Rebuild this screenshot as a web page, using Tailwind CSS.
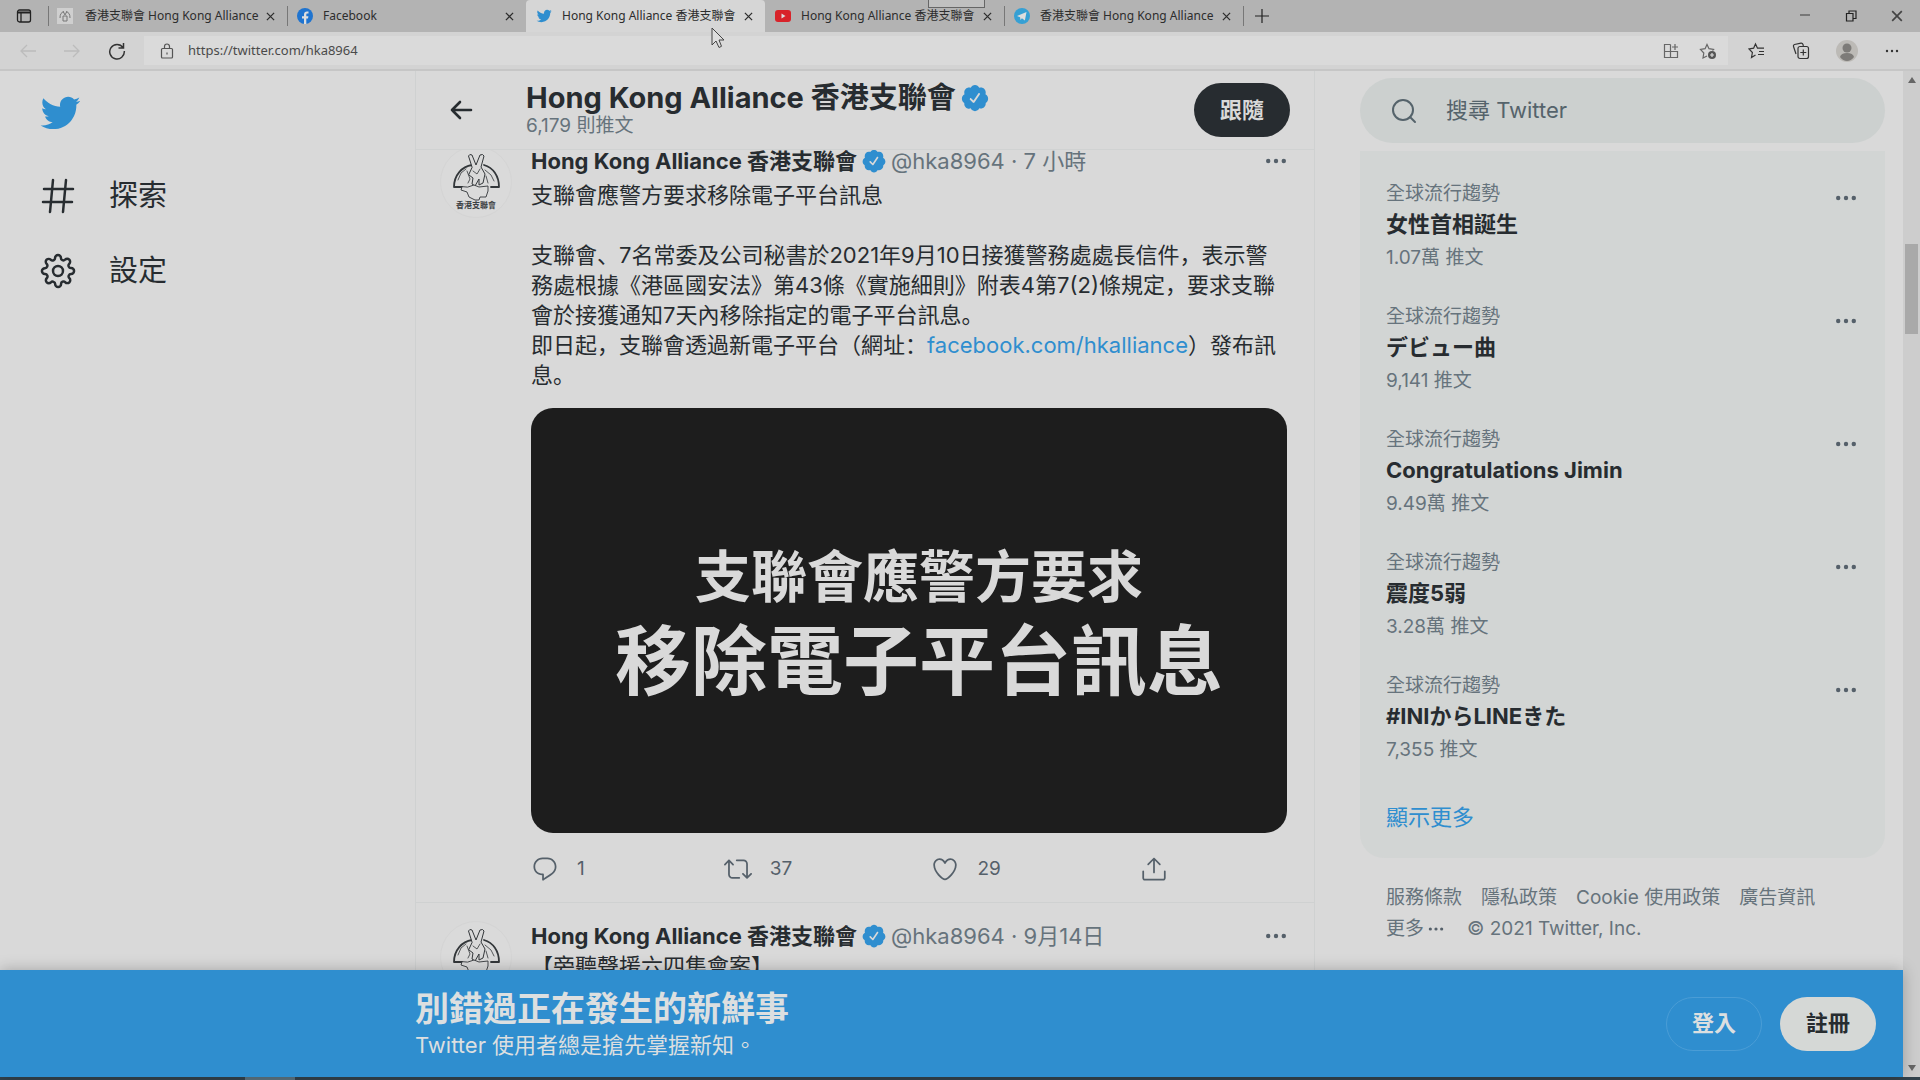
<!DOCTYPE html>
<html lang="zh-Hant">
<head>
    <meta charset="UTF-8">
    <meta name="viewport" content="width=device-width, initial-scale=1.0">
    <title>Hong Kong Alliance 香港支聯會 | Twitter</title>
    <script src="https://cdn.jsdelivr.net/npm/@tailwindcss/browser@4"></script>
</head>
<body class="bg-[#d9d9d9] text-[#272c30] font-['Inter','Noto_Sans_CJK_TC',sans-serif]">

    <!-- Shared icons -->
    <svg class="hidden">
        <symbol id="bird" viewBox="0 0 24 24"><path d="M23.643 4.937c-.835.37-1.732.62-2.675.733.962-.576 1.7-1.49 2.048-2.578-.9.534-1.897.922-2.958 1.13-.85-.904-2.06-1.47-3.4-1.47-2.572 0-4.658 2.086-4.658 4.66 0 .364.042.718.12 1.06-3.873-.195-7.304-2.05-9.602-4.868-.4.69-.63 1.49-.63 2.342 0 1.616.823 3.043 2.072 3.878-.764-.025-1.482-.234-2.11-.583v.06c0 2.257 1.605 4.14 3.737 4.568-.392.106-.803.162-1.227.162-.3 0-.593-.028-.877-.082.593 1.85 2.313 3.198 4.352 3.234-1.595 1.25-3.604 1.995-5.786 1.995-.376 0-.747-.022-1.112-.065 2.062 1.323 4.51 2.093 7.14 2.093 8.57 0 13.255-7.098 13.255-13.254 0-.2-.005-.402-.014-.602.91-.658 1.7-1.477 2.323-2.41z"/></symbol>
        <symbol id="verified" viewBox="0 0 24 24"><path d="M22.5 12.5c0-1.58-.875-2.95-2.148-3.6.154-.435.238-.905.238-1.4 0-2.21-1.71-3.998-3.818-3.998-.47 0-.92.084-1.336.25C14.818 2.415 13.51 1.5 12 1.5s-2.816.917-3.437 2.25c-.415-.165-.866-.25-1.336-.25-2.11 0-3.818 1.79-3.818 4 0 .494.083.964.237 1.4-1.272.65-2.147 2.018-2.147 3.6 0 1.495.782 2.798 1.942 3.486-.02.17-.032.34-.032.514 0 2.21 1.708 4 3.818 4 .47 0 .92-.086 1.335-.25.62 1.334 1.926 2.25 3.437 2.25 1.512 0 2.818-.916 3.437-2.25.415.163.865.248 1.336.248 2.11 0 3.818-1.79 3.818-4 0-.174-.012-.344-.033-.513 1.158-.687 1.943-1.99 1.943-3.484zm-6.616-3.334l-4.334 6.5c-.145.217-.382.334-.625.334-.143 0-.288-.04-.416-.126l-.115-.094-2.415-2.415c-.293-.293-.293-.768 0-1.06s.768-.294 1.06 0l1.77 1.767 3.825-5.74c.23-.345.696-.436 1.04-.207.346.23.44.696.21 1.04z"/></symbol>
        <symbol id="dots" viewBox="0 0 24 24"><circle cx="3.5" cy="12" r="2.4"/><circle cx="12" cy="12" r="2.4"/><circle cx="20.5" cy="12" r="2.4"/></symbol>
        <symbol id="close" viewBox="0 0 10 10"><path d="M1 1l8 8M9 1l-8 8" fill="none" stroke="currentColor" stroke-width="1.4"/></symbol>
        <symbol id="alliance" viewBox="0 0 72 72">
            <circle cx="36" cy="36" r="35.5" fill="#dadada" stroke="#d4d4d4" stroke-width="1"/>
            <g fill="none" stroke="#33373a" stroke-linejoin="round" stroke-linecap="round">
                <path d="M14 41c0-12 8-20.500 18-22M44 19c9 2.500 15 11 15 22M14 41h8M51 41h8" stroke-width="1.800"/>
                <path d="M32 21L28.500 10q1-2.500 3.500-1l4 10 4-10q3-1.500 4 1L41 21l4 7-2 9-4 2v-6l-4 7-3-2 1-6-4-3z" fill="#d9d9d9" stroke-width="1"/>
                <path d="M33 25l4 3 3-5M18 34l3-7 5-4M27 25l3 8-2 4M45 24l6 5 3 6M46 30l2 7" stroke-width=".8"/>
                <path d="M22 41l-1 3 6 2 2 5 6 3 4 0 1-3 6 0 2-6 0-5-9 1-5-2-6 2z" fill="#dbdbdb" stroke-width=".9"/>
            </g>
            <text x="36" y="62" text-anchor="middle" font-size="8" font-weight="700" fill="#3c4043">香港支聯會</text>
        </symbol>
    </svg>

    <div class="h-screen flex flex-col overflow-hidden">

        <!-- Tab strip -->
        <div class="relative h-8 shrink-0 flex items-center bg-[#b3b3b3] text-[#2d2d2d] text-xs font-['Noto_Sans','Noto_Sans_CJK_TC',sans-serif]">
            <button class="w-12 flex justify-center" aria-label="Tab actions">
                <svg class="size-4" viewBox="0 0 16 16" fill="none" stroke="#222" stroke-width="1.300"><rect x="1.500" y="2" width="13" height="12" rx="2"/><path d="M2 4.500h12" stroke-width="2"/><path d="M5 5v9"/></svg>
            </button>
            <div class="w-[239px] h-full flex items-center pl-2 pr-3">
                <span class="w-px h-5 bg-[#777] -ml-2 mr-2"></span>
                <svg class="size-4 mr-3 shrink-0"><rect width="16" height="16" fill="#cfcfcf"/><path d="M3 10q0-6 4-6M13 10q0-6-4-6M6 3l2 4 2-4M6 8v5h4V8z" fill="none" stroke="#777"/></svg>
                <span class="flex-1 whitespace-nowrap">香港支聯會 Hong Kong Alliance</span>
                <button aria-label="Close tab"><svg class="size-[9px]"><use href="#close"/></svg></button>
            </div>
            <div class="w-[239px] h-full flex items-center pl-2 pr-3">
                <span class="w-px h-5 bg-[#777] -ml-2 mr-2"></span>
                <svg class="size-4 ml-px mr-[10px] shrink-0" viewBox="0 0 16 16"><circle cx="8" cy="8" r="8" fill="#1f74d0"/><path d="M7 16v-5.500H5V8.200h2V6.500C7 4.500 8.200 3.500 10 3.500l1.500.1v2h-1c-1 0-1.200.5-1.200 1.200v1.400h2.100l-.4 2.300H9.300V16z" fill="#dedede"/></svg>
                <span class="flex-1 whitespace-nowrap">Facebook</span>
                <button aria-label="Close tab"><svg class="size-[9px]"><use href="#close"/></svg></button>
            </div>
            <div class="w-[239px] h-full flex items-center pl-[10px] pr-3 bg-[#d6d6d6] rounded-t">
                <svg class="size-4 mr-[10px] shrink-0" fill="#2f8ecf"><use href="#bird"/></svg>
                <span class="flex-1 whitespace-nowrap">Hong Kong Alliance 香港支聯會</span>
                <button aria-label="Close tab"><svg class="size-[9px]"><use href="#close"/></svg></button>
            </div>
            <div class="w-[239px] h-full flex items-center pl-[10px] pr-3">
                <svg class="size-4 mr-[10px] shrink-0" viewBox="0 0 16 16"><rect y="2" width="16" height="12" rx="3" fill="#d8232a"/><path d="M6.500 5.500v5l4-2.500z" fill="#ddd"/></svg>
                <span class="flex-1 whitespace-nowrap">Hong Kong Alliance 香港支聯會</span>
                <button aria-label="Close tab"><svg class="size-[9px]"><use href="#close"/></svg></button>
            </div>
            <div class="w-[239px] h-full flex items-center pl-2 pr-3">
                <span class="w-px h-5 bg-[#777] -ml-2 mr-2"></span>
                <svg class="size-4 ml-px mr-[10px] shrink-0" viewBox="0 0 16 16"><circle cx="8" cy="8" r="8" fill="#36a0d4"/><path d="M3 8l9.500-4-1.600 8.500-3-2.200L6.500 12l-.4-2.800z" fill="#dedede"/></svg>
                <span class="flex-1 whitespace-nowrap">香港支聯會 Hong Kong Alliance</span>
                <button aria-label="Close tab"><svg class="size-[9px]"><use href="#close"/></svg></button>
            </div>
            <span class="w-px h-5 bg-[#777]"></span>
            <button class="ml-[10px]" aria-label="New tab"><svg class="size-4" viewBox="0 0 16 16" stroke="#222" stroke-width="1.200"><path d="M8 1v14M1 8h14"/></svg></button>
            <div class="ml-auto pr-[17px] flex items-center gap-[34px]">
                <button aria-label="Minimize"><svg class="size-3" viewBox="0 0 12 12"><path d="M1 5h10" stroke="#777" stroke-width="2"/></svg></button>
                <button aria-label="Restore"><svg class="size-3" viewBox="0 0 12 12" fill="none" stroke="#222" stroke-width="1.200"><path d="M1.500 3.500h6.500v7.500H1.500zM4 3.500V1h7v7.500H8"/></svg></button>
                <button aria-label="Close window"><svg class="size-3 text-[#444]"><use href="#close"/></svg></button>
            </div>
            <!-- Window handle and mouse pointer lie over the tabs -->
            <div class="absolute left-[928px] top-0 w-[57px] h-2 bg-[#c0c0c0] border border-t-0 border-[#666]"></div>
            <svg class="absolute left-[711px] top-[27px] w-[14px] h-[22px] z-20" viewBox="0 0 14 22"><path d="M1 1v17l4-4 3 6.500 2.500-1.200L8 13h5z" fill="#dedede" stroke="#444" stroke-width="1"/></svg>
        </div>

        <!-- Address bar -->
        <div class="h-[39px] shrink-0 flex items-center pr-5 bg-[#d3d3d3] border-b-2 border-[#c6c6c6] font-['Noto_Sans',sans-serif]">
            <div class="w-36 flex items-center pl-5 gap-7">
                <button aria-label="Back"><svg class="size-4" viewBox="0 0 16 16" fill="none" stroke="#bcbcbc" stroke-width="1.300"><path d="M16 8H1M7 2L1 8l6 6"/></svg></button>
                <button aria-label="Forward"><svg class="size-4" viewBox="0 0 16 16" fill="none" stroke="#bcbcbc" stroke-width="1.300"><path d="M0 8h15M9 2l6 6-6 6"/></svg></button>
                <button aria-label="Refresh"><svg class="size-[18px]" viewBox="0 0 18 18" fill="none" stroke="#333" stroke-width="1.500"><path d="M15 5.500A7.300 7.300 0 1 0 16.300 9M15.500 1v5h-5"/></svg></button>
            </div>
            <div class="flex-1 h-[29px] flex items-center bg-[#dadada] px-[15px]">
                <svg class="size-4 mr-[13px]" viewBox="0 0 16 16" fill="none" stroke="#555" stroke-width="1.200"><rect x="2.500" y="5.500" width="11" height="9.500" rx="1"/><path d="M5.500 5.500V3.500a2.500 2.500 0 0 1 5 0v2M8 9.500v2"/></svg>
                <input class="flex-1 bg-transparent text-[13px] text-[#4a4a4a] outline-none" type="text" aria-label="Address" value="https://twitter.com/hka8964">
                <button aria-label="Apps"><svg class="size-4" viewBox="0 0 16 16" fill="none" stroke="#666" stroke-width="1.200"><path d="M7.500 1.500h-6v13h13v-6h-13M7.500 1.500v13M12 1v6M9 4h6"/></svg></button>
                <button class="ml-5 -mr-1" aria-label="Add to favourites"><svg class="size-[18px]" viewBox="0 0 18 18" fill="none" stroke="#666" stroke-width="1.200"><path d="M8 14l-4 2 .8-5L1.500 7.500l4.600-.8L8 2.500l2 4.200 4.500.8-1 1"/><circle cx="13" cy="13" r="4" fill="#555" stroke="none"/><path d="M13 11v4M11 13h4" stroke="#ddd"/></svg></button>
            </div>
            <div class="flex items-center pl-5 gap-[26px]">
                <button aria-label="Favourites"><svg class="size-[18px]" viewBox="0 0 18 18" fill="none" stroke="#333" stroke-width="1.200"><path d="M7.500 13l-4 2.500.9-5L1 7l4.600-.8L7.500 2l2 4.200H16M11 9.500h5M10 12.500h6"/></svg></button>
                <button aria-label="Collections"><svg class="size-[18px]" viewBox="0 0 18 18" fill="none" stroke="#333" stroke-width="1.200"><path d="M4 12L1.500 4.500Q1 3 2.500 2.500L9 1.200q1.500-.2 2 1.300l.3 1.500"/><rect x="6" y="4.500" width="10.500" height="12" rx="2"/><path d="M11.300 7.500v6M8.300 10.500h6"/></svg></button>
                <button aria-label="Profile"><svg class="size-[22px]" viewBox="0 0 22 22"><circle cx="11" cy="11" r="11" fill="#bcbab6"/><circle cx="11" cy="8" r="4.500" fill="#7d7b78"/><path d="M4 17q1-4 7-4t7 4q-3 4-7 4t-7-4z" fill="#7d7b78"/></svg></button>
                <button aria-label="Settings and more"><svg class="size-4" fill="#333" viewBox="0 0 16 16"><circle cx="3" cy="8" r="1.200"/><circle cx="8" cy="8" r="1.200"/><circle cx="13" cy="8" r="1.200"/></svg></button>
            </div>
        </div>

        <div class="flex-1 min-h-0 flex">
            <div class="flex-1 min-w-0 flex flex-col">
                <div class="flex-1 min-h-0 overflow-hidden grid grid-cols-[415fr_900fr_588fr]">

                    <!-- Navigation -->
                    <nav class="pl-[39px] pt-[21px]">
                        <a href="#" class="block" aria-label="Twitter"><svg class="size-[42px]" fill="#2f8ecf"><use href="#bird"/></svg></a>
                        <div class="mt-6 text-[29px]">
                            <a href="#" class="h-[75px] flex items-center gap-[32px]">
                                <svg class="size-[38px]" viewBox="0 0 38 38" stroke="#272c30" stroke-width="2.500" stroke-linecap="round"><path d="M14 3l-3 32M27 3l-3 32M5 12h29M4 25h29"/></svg>
                                <span>探索</span>
                            </a>
                            <a href="#" class="h-[75px] flex items-center gap-[32px]">
                                <svg class="size-[38px]" viewBox="0 0 26 26" fill="none" stroke="#272c30" stroke-width="1.700"><g transform="translate(1 1)"><circle cx="12" cy="12" r="3.400"/><path d="M19.400 15a1.650 1.650 0 0 0 .33 1.820l.06.06a2 2 0 0 1 0 2.830 2 2 0 0 1-2.830 0l-.06-.06a1.650 1.650 0 0 0-1.820-.33 1.650 1.650 0 0 0-1 1.510V21a2 2 0 0 1-2 2 2 2 0 0 1-2-2v-.09A1.650 1.650 0 0 0 9 19.400a1.650 1.650 0 0 0-1.820.33l-.06.06a2 2 0 0 1-2.830 0 2 2 0 0 1 0-2.830l.06-.06a1.650 1.650 0 0 0 .33-1.820 1.650 1.650 0 0 0-1.510-1H3a2 2 0 0 1-2-2 2 2 0 0 1 2-2h.09A1.650 1.650 0 0 0 4.600 9a1.650 1.650 0 0 0-.33-1.820l-.06-.06a2 2 0 0 1 0-2.830 2 2 0 0 1 2.830 0l.06.06a1.650 1.650 0 0 0 1.820.33H9a1.650 1.650 0 0 0 1-1.510V3a2 2 0 0 1 2-2 2 2 0 0 1 2 2v.09a1.650 1.650 0 0 0 1 1.510 1.650 1.650 0 0 0 1.820-.33l.06-.06a2 2 0 0 1 2.830 0 2 2 0 0 1 0 2.830l-.06.06a1.650 1.650 0 0 0-.33 1.820V9a1.650 1.650 0 0 0 1.510 1H21a2 2 0 0 1 2 2 2 2 0 0 1-2 2h-.09a1.650 1.650 0 0 0-1.510 1z"/></g></svg>
                                <span>設定</span>
                            </a>
                        </div>
                    </nav>

                    <!-- Timeline -->
                    <main class="min-w-0 border-x border-[#cfd1d1]">
                        <header class="relative z-10 h-[79px] flex items-center px-6 bg-[#d9d9d9]/95 border-b border-[#d0d2d2]">
                            <button class="w-[86px] pl-[9px]" aria-label="Back"><svg class="size-6" viewBox="0 0 24 24" fill="none" stroke="#272c30" stroke-width="2.600" stroke-linecap="round" stroke-linejoin="round"><path d="M22 12H3M11 4l-8 8 8 8"/></svg></button>
                            <div>
                                <h1 class="flex items-center gap-1 text-[29px] leading-8 font-bold">Hong Kong Alliance 香港支聯會<svg class="size-[30px]" fill="#2f8ecf"><use href="#verified"/></svg></h1>
                                <p class="text-[19px] leading-6 text-[#66737c]">6,179 則推文</p>
                            </div>
                            <button class="ml-auto w-24 h-[54px] rounded-full bg-[#272c30] text-[#d9d9d9] text-[22px] font-bold">跟隨</button>
                        </header>

                        <div class="-mt-[22px]">
                            <article class="flex gap-[19px] pl-6 pr-[27px] pt-[18px] pb-[15px] border-b border-[#cfd1d1]">
                                <svg class="size-[72px] shrink-0"><use href="#alliance"/></svg>
                                <div class="flex-1 min-w-0 text-[22px] leading-[30px]">
                                    <div class="flex items-center whitespace-nowrap">
                                        <a href="#" class="font-bold">Hong Kong Alliance 香港支聯會</a>
                                        <svg class="size-[26px] mx-1" fill="#2f8ecf"><use href="#verified"/></svg>
                                        <span class="text-[#66737c]">@hka8964 · 7 小時</span>
                                        <button class="ml-auto" aria-label="More"><svg class="size-[22px]" fill="#55606a"><use href="#dots"/></svg></button>
                                    </div>
                                    <p lang="zh-Hans" class="mt-1 font-['Inter','Noto_Sans_CJK_SC',sans-serif]">支聯會應警方要求移除電子平台訊息<br><br>支聯會、7名常委及公司秘書於2021年9月10日接獲警務處處長信件，表示警務處根據《港區國安法》第43條《實施細則》附表4第7(2)條規定，要求支聯會於接獲通知7天內移除指定的電子平台訊息。<br>即日起，支聯會透過新電子平台（網址：<a href="#" class="text-[#2f8ecf]">facebook.com/hkalliance</a>）發布訊息。</p>
                                    <div class="mt-[18px] h-[425px] rounded-[22px] bg-[#1d1d1d] text-[#d9d9d9] font-bold flex flex-col items-center justify-center pl-5 pb-1">
                                        <span class="text-[56px] leading-[84px]">支聯會應警方要求</span>
                                        <span class="text-[76px] leading-[84px]">移除電子平台訊息</span>
                                    </div>
                                    <div class="mt-[18px] h-9 w-[637px] flex items-center justify-between text-[19px] text-[#55606a]">
                                        <button class="flex items-center gap-[18px]"><svg class="size-7" viewBox="0 0 24 24" fill="currentColor"><path d="M14.046 2.242l-4.148-.01h-.002c-4.374 0-7.8 3.427-7.8 7.802 0 4.098 3.186 7.206 7.465 7.370v3.828c0 .108.044.286.12.403.142.225.384.347.632.347.138 0 .277-.038.402-.118.264-.168 6.473-4.140 8.088-5.506 1.902-1.610 3.040-3.970 3.043-6.312v-.017c-.006-4.367-3.430-7.787-7.800-7.788zm3.787 12.972c-1.134.96-4.862 3.405-6.772 4.643V16.670c0-.414-.335-.75-.75-.75h-.396c-3.660 0-6.318-2.476-6.318-5.886 0-3.534 2.768-6.302 6.300-6.302l4.147.01h.002c3.532 0 6.300 2.766 6.302 6.296-.003 1.910-.942 3.844-2.514 5.176z"/></svg>1</button>
                                        <button class="flex items-center gap-[18px]"><svg class="size-7" viewBox="0 0 24 24" fill="currentColor"><path d="M23.770 15.670c-.292-.293-.767-.293-1.060 0l-2.220 2.220V7.650c0-2.068-1.683-3.750-3.750-3.750h-5.850c-.414 0-.75.336-.75.75s.336.75.75.75h5.850c1.240 0 2.250 1.010 2.250 2.250v10.240l-2.220-2.220c-.293-.293-.768-.293-1.060 0s-.294.768 0 1.060l3.500 3.500c.145.147.337.22.53.22s.383-.072.53-.22l3.500-3.500c.294-.292.294-.767 0-1.060zm-10.660 3.280H7.260c-1.240 0-2.250-1.010-2.250-2.250V6.460l2.220 2.220c.148.147.34.22.532.22s.384-.073.53-.22c.293-.293.293-.768 0-1.060l-3.500-3.500c-.293-.294-.768-.294-1.060 0l-3.500 3.500c-.294.292-.294.767 0 1.060s.767.293 1.060 0l2.220-2.220V16.700c0 2.068 1.683 3.750 3.750 3.750h5.850c.414 0 .75-.336.75-.75s-.337-.75-.75-.75z"/></svg>37</button>
                                        <button class="flex items-center gap-[18px]"><svg class="size-7" viewBox="0 0 24 24" fill="currentColor"><path d="M12 21.638h-.014C9.403 21.590 1.950 14.856 1.950 8.478c0-3.064 2.525-5.754 5.403-5.754 2.290 0 3.830 1.580 4.646 2.730.814-1.148 2.354-2.730 4.645-2.730 2.880 0 5.404 2.690 5.404 5.755 0 6.376-7.454 13.110-10.037 13.157H12zM7.354 4.225c-2.080 0-3.903 1.988-3.903 4.255 0 5.740 7.034 11.596 8.550 11.658 1.518-.062 8.550-5.917 8.550-11.658 0-2.267-1.823-4.255-3.903-4.255-2.528 0-3.940 2.936-3.952 2.965-.23.562-1.156.562-1.387 0-.014-.03-1.425-2.965-3.954-2.965z"/></svg>29</button>
                                        <button aria-label="Share"><svg class="size-7" viewBox="0 0 24 24" fill="currentColor"><path d="M17.530 7.470l-5-5c-.293-.293-.768-.293-1.060 0l-5 5c-.294.293-.294.768 0 1.060s.767.294 1.060 0l3.720-3.720V15c0 .414.336.75.75.75s.75-.336.75-.75V4.810l3.720 3.720c.146.147.338.22.53.22s.384-.072.53-.22c.293-.293.293-.767 0-1.060z"/><path d="M19.708 21.944H4.292C3.028 21.944 2 20.916 2 19.652V14c0-.414.336-.75.75-.75s.75.336.75.75v5.652c0 .437.355.792.792.792h15.416c.437 0 .792-.355.792-.792V14c0-.414.336-.75.75-.75s.75.336.75.75v5.652c0 1.264-1.028 2.292-2.292 2.292z"/></svg></button>
                                    </div>
                                </div>
                            </article>

                            <article class="flex gap-[19px] pl-6 pr-[27px] pt-[18px] pb-[15px]">
                                <svg class="size-[72px] shrink-0"><use href="#alliance"/></svg>
                                <div class="flex-1 min-w-0 text-[22px] leading-[30px]">
                                    <div class="flex items-center whitespace-nowrap">
                                        <a href="#" class="font-bold">Hong Kong Alliance 香港支聯會</a>
                                        <svg class="size-[26px] mx-1" fill="#2f8ecf"><use href="#verified"/></svg>
                                        <span class="text-[#66737c]">@hka8964 · 9月14日</span>
                                        <button class="ml-auto" aria-label="More"><svg class="size-[22px]" fill="#55606a"><use href="#dots"/></svg></button>
                                    </div>
                                    <p lang="zh-Hans" class="font-['Inter','Noto_Sans_CJK_SC',sans-serif]">【旁聽聲援六四集會案】</p>
                                </div>
                            </article>
                        </div>
                    </main>

                    <!-- Sidebar -->
                    <aside class="min-w-0 pl-[45px] pr-[18px]">
                        <div class="pt-[7px] pb-2">
                            <label class="h-[65px] rounded-full bg-[#ccd0cf] flex items-center px-[30px] gap-[28px]">
                                <svg class="size-7" viewBox="0 0 28 28" fill="none" stroke="#55636b" stroke-width="2" stroke-linecap="round"><circle cx="13" cy="13" r="10"/><path d="M20 20l5 5"/></svg>
                                <input class="flex-1 bg-transparent text-[22px] outline-none placeholder:text-[#55636b]" type="text" aria-label="搜尋 Twitter" placeholder="搜尋 Twitter">
                            </label>
                        </div>
                        <section class="pt-[14px] pb-1 bg-[#d2d5d4] rounded-b-[24px]">
                            <div class="flex justify-between pl-[26px] pr-7 py-[17px] h-[123px]">
                                <div>
                                    <p class="text-[19px] leading-6 text-[#66737c]">全球流行趨勢</p>
                                    <p class="mt-[3px] text-[22px] leading-[30px] font-bold">女性首相誕生</p>
                                    <p class="mt-[7px] text-[19px] leading-6 text-[#66737c]">1.07萬 推文</p>
                                </div>
                                <button class="self-start mt-[5px]" aria-label="More"><svg class="size-[22px]" fill="#55606a"><use href="#dots"/></svg></button>
                            </div>
                            <div class="flex justify-between pl-[26px] pr-7 py-[17px] h-[123px]">
                                <div>
                                    <p class="text-[19px] leading-6 text-[#66737c]">全球流行趨勢</p>
                                    <p class="mt-[3px] text-[22px] leading-[30px] font-bold" lang="ja">デビュー曲</p>
                                    <p class="mt-[7px] text-[19px] leading-6 text-[#66737c]">9,141 推文</p>
                                </div>
                                <button class="self-start mt-[5px]" aria-label="More"><svg class="size-[22px]" fill="#55606a"><use href="#dots"/></svg></button>
                            </div>
                            <div class="flex justify-between pl-[26px] pr-7 py-[17px] h-[123px]">
                                <div>
                                    <p class="text-[19px] leading-6 text-[#66737c]">全球流行趨勢</p>
                                    <p class="mt-[3px] text-[22px] leading-[30px] font-bold">Congratulations Jimin</p>
                                    <p class="mt-[7px] text-[19px] leading-6 text-[#66737c]">9.49萬 推文</p>
                                </div>
                                <button class="self-start mt-[5px]" aria-label="More"><svg class="size-[22px]" fill="#55606a"><use href="#dots"/></svg></button>
                            </div>
                            <div class="flex justify-between pl-[26px] pr-7 py-[17px] h-[123px]">
                                <div>
                                    <p class="text-[19px] leading-6 text-[#66737c]">全球流行趨勢</p>
                                    <p class="mt-[3px] text-[22px] leading-[30px] font-bold">震度5弱</p>
                                    <p class="mt-[7px] text-[19px] leading-6 text-[#66737c]">3.28萬 推文</p>
                                </div>
                                <button class="self-start mt-[5px]" aria-label="More"><svg class="size-[22px]" fill="#55606a"><use href="#dots"/></svg></button>
                            </div>
                            <div class="flex justify-between pl-[26px] pr-7 py-[17px] h-[123px]">
                                <div>
                                    <p class="text-[19px] leading-6 text-[#66737c]">全球流行趨勢</p>
                                    <p class="mt-[3px] text-[22px] leading-[30px] font-bold" lang="ja">#INIからLINEきた</p>
                                    <p class="mt-[7px] text-[19px] leading-6 text-[#66737c]">7,355 推文</p>
                                </div>
                                <button class="self-start mt-[5px]" aria-label="More"><svg class="size-[22px]" fill="#55606a"><use href="#dots"/></svg></button>
                            </div>
                            <a href="#" class="h-[74px] pl-[26px] flex items-center text-[22px] text-[#2f8ecf]">顯示更多</a>
                        </section>
                        <footer class="pt-6 px-[26px] flex flex-wrap gap-x-[19px] text-[19px] leading-[31px] text-[#66737c]">
                            <a href="#">服務條款</a>
                            <a href="#">隱私政策</a>
                            <a href="#">Cookie 使用政策</a>
                            <a href="#">廣告資訊</a>
                            <button class="flex items-center gap-1 pr-1">更多<svg class="size-4" fill="#55606a"><use href="#dots"/></svg></button>
                            <span>© 2021 Twitter, Inc.</span>
                        </footer>
                    </aside>
                </div>

                <!-- Sign-up banner -->
                <div class="relative z-10 h-[107px] shrink-0 flex items-center pl-[415px] pr-[27px] bg-[#2f8ecf] text-[#dcdfe0] shadow-[0_0_14px_rgba(0,0,0,0.25)]">
                    <div>
                        <p class="text-[34px] leading-[42px] font-bold">別錯過正在發生的新鮮事</p>
                        <p class="text-[22px] leading-[30px]">Twitter 使用者總是搶先掌握新知。</p>
                    </div>
                    <button class="ml-auto w-24 h-[54px] rounded-full border border-[#4a9dd6] text-[22px] font-bold">登入</button>
                    <button class="ml-[18px] w-24 h-[54px] rounded-full bg-[#d5d8d6] text-[#272c30] text-[22px] font-bold">註冊</button>
                </div>
            </div>

            <!-- Scrollbar -->
            <div class="w-[17px] shrink-0 flex flex-col items-center justify-between py-[6px] bg-[#cdcdcd]">
                <svg class="w-2 h-[6px]" viewBox="0 0 8 6"><path d="M0 6l4-6 4 6z" fill="#666"/></svg>
                <div class="w-[13px] h-[90px] mb-[570px] bg-[#a9a9a9]"></div>
                <svg class="w-2 h-[6px]" viewBox="0 0 8 6"><path d="M0 0l4 6 4-6z" fill="#666"/></svg>
            </div>
        </div>

        <!-- Taskbar edge -->
        <div class="h-[3px] shrink-0 bg-[#33434d]"><div class="ml-[245px] w-[50px] h-full bg-[#5b7482]"></div></div>
    </div>
</body>
</html>
